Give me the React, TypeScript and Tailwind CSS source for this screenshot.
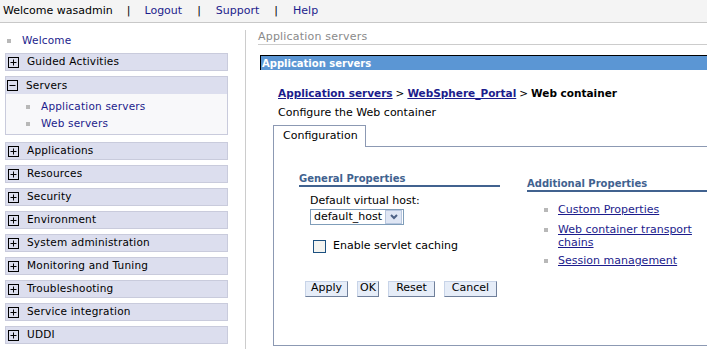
import { ReactNode } from 'react';

const font = { fontFamily: '"DejaVu Sans", Verdana, sans-serif' };

function PlusBox({ minus = false }: { minus?: boolean }) {
  return (
    <svg width="11" height="11" viewBox="0 0 11 11" className="shrink-0">
      <rect x="0.5" y="0.5" width="10" height="10" fill="none" stroke="#000" />
      <line x1="2.5" y1="5.5" x2="8.5" y2="5.5" stroke="#000" />
      {!minus && <line x1="5.5" y1="2.5" x2="5.5" y2="8.5" stroke="#000" />}
    </svg>
  );
}

function Bullet({ className = '' }: { className?: string }) {
  return <span className={`block w-[4px] h-[4px] bg-[#b8b8b8] shrink-0 ${className}`} />;
}

function NavBox({ label }: { label: string }) {
  return (
    <div className="h-[18px] flex items-center gap-[8px] pl-[2px] bg-[#dcdeee] border border-[#c9cbdc] text-[10.5px] tracking-[0.2px] text-black">
      <PlusBox />
      <span>{label}</span>
    </div>
  );
}

function Btn({ children, w }: { children: ReactNode; w: string }) {
  return (
    <button className={`${w} h-[16px] flex items-center justify-center bg-[#e6edf8] border border-t-[#c8d4e8] border-l-[#c8d4e8] border-r-[#6f7f9a] border-b-[#6f7f9a] text-[11px] text-black`}>
      {children}
    </button>
  );
}

export default function App() {
  const collapsed = [
    'Applications',
    'Resources',
    'Security',
    'Environment',
    'System administration',
    'Monitoring and Tuning',
    'Troubleshooting',
    'Service integration',
    'UDDI',
  ];

  return (
    <div className="w-[707px] h-[349px] overflow-hidden bg-white text-black" style={font}>
      {/* Top bar */}
      <div className="h-[23px] bg-[#f4f4f4] border-b border-[#c8c8c8] flex items-center pl-[3px] text-[11px]">
        <span>Welcome wasadmin</span>
        <span className="px-[14px]">|</span>
        <a className="text-[#1c1c8c]">Logout</a>
        <span className="px-[15px]">|</span>
        <a className="text-[#1c1c8c]">Support</a>
        <span className="px-[15px]">|</span>
        <a className="text-[#1c1c8c]">Help</a>
      </div>

      <div className="flex pt-[7px]">
        {/* Left nav */}
        <div className="w-[246px] shrink-0 pl-[5px] pr-[17px] pt-[4px] border-r border-[#cccccc] h-[319px]">
          <div className="h-[14px] flex items-center gap-[11px] pl-[2px] text-[10.5px] tracking-[0.2px] text-[#1c1c8c]">
            <Bullet />
            <span>Welcome</span>
          </div>
          <div className="mt-[5px] flex flex-col gap-[5px]">
            <NavBox label="Guided Activities" />
            <div className="border border-[#c9cbdc] bg-[#f8f8fa]">
              <div className="h-[17px] flex items-center gap-[8px] pl-[1px] bg-[#dcdeee] text-[10.5px] tracking-[0.2px]">
                <PlusBox minus />
                <span>Servers</span>
              </div>
              <div className="pl-[20px] pt-[6px] pb-[3px] flex flex-col gap-[3px] text-[10.5px] tracking-[0.2px] text-[#1c1c8c]">
                <div className="h-[14px] flex items-center gap-[11px]">
                  <Bullet />
                  <span>Application servers</span>
                </div>
                <div className="h-[14px] flex items-center gap-[11px]">
                  <Bullet />
                  <span>Web servers</span>
                </div>
              </div>
            </div>
            <div className="mt-[2px] flex flex-col gap-[5px]">
              {collapsed.map((c) => (
                <NavBox key={c} label={c} />
              ))}
            </div>
          </div>
        </div>

        {/* Right content */}
        <div className="flex-1 pl-[12px]">
          <div className="h-[15px] border-b border-[#cccccc] text-[11px] text-[#8a8a8a] leading-[14px] tracking-[0.2px]">
            Application servers
          </div>
          <div className="ml-[2px] mt-[10px] h-[15px] bg-[#5b96d4] border-t border-l border-black flex items-center pl-[1px] text-[10px] font-bold text-white">
            Application servers
          </div>

          <div className="pl-[20px] pt-[17px] text-[11px]">
            <div className="font-bold text-[10.5px] h-[14px] flex items-center">
              <a className="text-[#1c1c8c] underline">Application servers</a>
              <span className="px-[3px] font-normal">&gt;</span>
              <a className="text-[#1c1c8c] underline">WebSphere_Portal</a>
              <span className="px-[3px] font-normal">&gt;</span>
              <span>Web container</span>
            </div>
            <div className="mt-[5px] h-[14px] flex items-center">Configure the Web container</div>
          </div>

          <div className="ml-[15px] mt-[5px]">
            <div className="w-[93px] h-[22px] border border-b-0 border-[#8c99b3] bg-white flex items-center pl-[9px] text-[11px] relative z-10">
              Configuration
            </div>
            <div className="border border-[#8c99b3] border-r-0 -mt-px h-[200px] flex">
              {/* General properties */}
              <div className="w-[253px] pl-[25px] pt-[25px] shrink-0">
                <div className="w-[201px] border-b-2 border-[#41628f] text-[10px] leading-[13px] font-bold text-[#41628f]">
                  General Properties
                </div>
                <div className="pl-[11px] mt-[7px] text-[11px]">
                  <div className="h-[14px] leading-[14px]">Default virtual host:</div>
                  <div className="mt-[1px] w-[94px] h-[16px] border border-[#7f9db9] flex items-center bg-white">
                    <span className="flex-1 pl-[3px]">default_host</span>
                    <span className="w-[17px] h-[14px] mr-px bg-[#dfe6f4] border border-[#b7c6de] flex items-center justify-center">
                      <svg width="8" height="6" viewBox="0 0 8 6">
                        <path d="M1 1 L4 4 L7 1" fill="none" stroke="#4d6185" strokeWidth="2" />
                      </svg>
                    </span>
                  </div>
                  <div className="mt-[13px] ml-[3px] flex items-center gap-[7px]">
                    <span className="w-[13px] h-[13px] border border-[#1c5180] bg-[#f4f4f0]" />
                    <span>Enable servlet caching</span>
                  </div>
                </div>
                <div className="mt-[26px] pl-[6px] flex gap-[9px]">
                  <Btn w="w-[43px]">Apply</Btn>
                  <Btn w="w-[22px]">OK</Btn>
                  <Btn w="w-[47px]">Reset</Btn>
                  <Btn w="w-[53px]">Cancel</Btn>
                </div>
              </div>

              {/* Additional properties */}
              <div className="flex-1 pt-[30px]">
                <div className="border-b-2 border-[#41628f] text-[10px] leading-[13px] font-bold text-[#41628f]">
                  Additional Properties
                </div>
                <div className="pl-[17px] mt-[11px] flex flex-col text-[11px] text-[#1c1c8c]">
                  <div className="flex items-start gap-[10px]">
                    <Bullet className="mt-[5px]" />
                    <a className="underline leading-[13px]">Custom Properties</a>
                  </div>
                  <div className="mt-[7px] flex items-start gap-[10px]">
                    <Bullet className="mt-[5px]" />
                    <a className="underline leading-[13px] w-[140px]">Web container transport chains</a>
                  </div>
                  <div className="mt-[5px] flex items-start gap-[10px]">
                    <Bullet className="mt-[5px]" />
                    <a className="underline leading-[13px]">Session management</a>
                  </div>
                </div>
              </div>
            </div>
          </div>
        </div>
      </div>
    </div>
  );
}
